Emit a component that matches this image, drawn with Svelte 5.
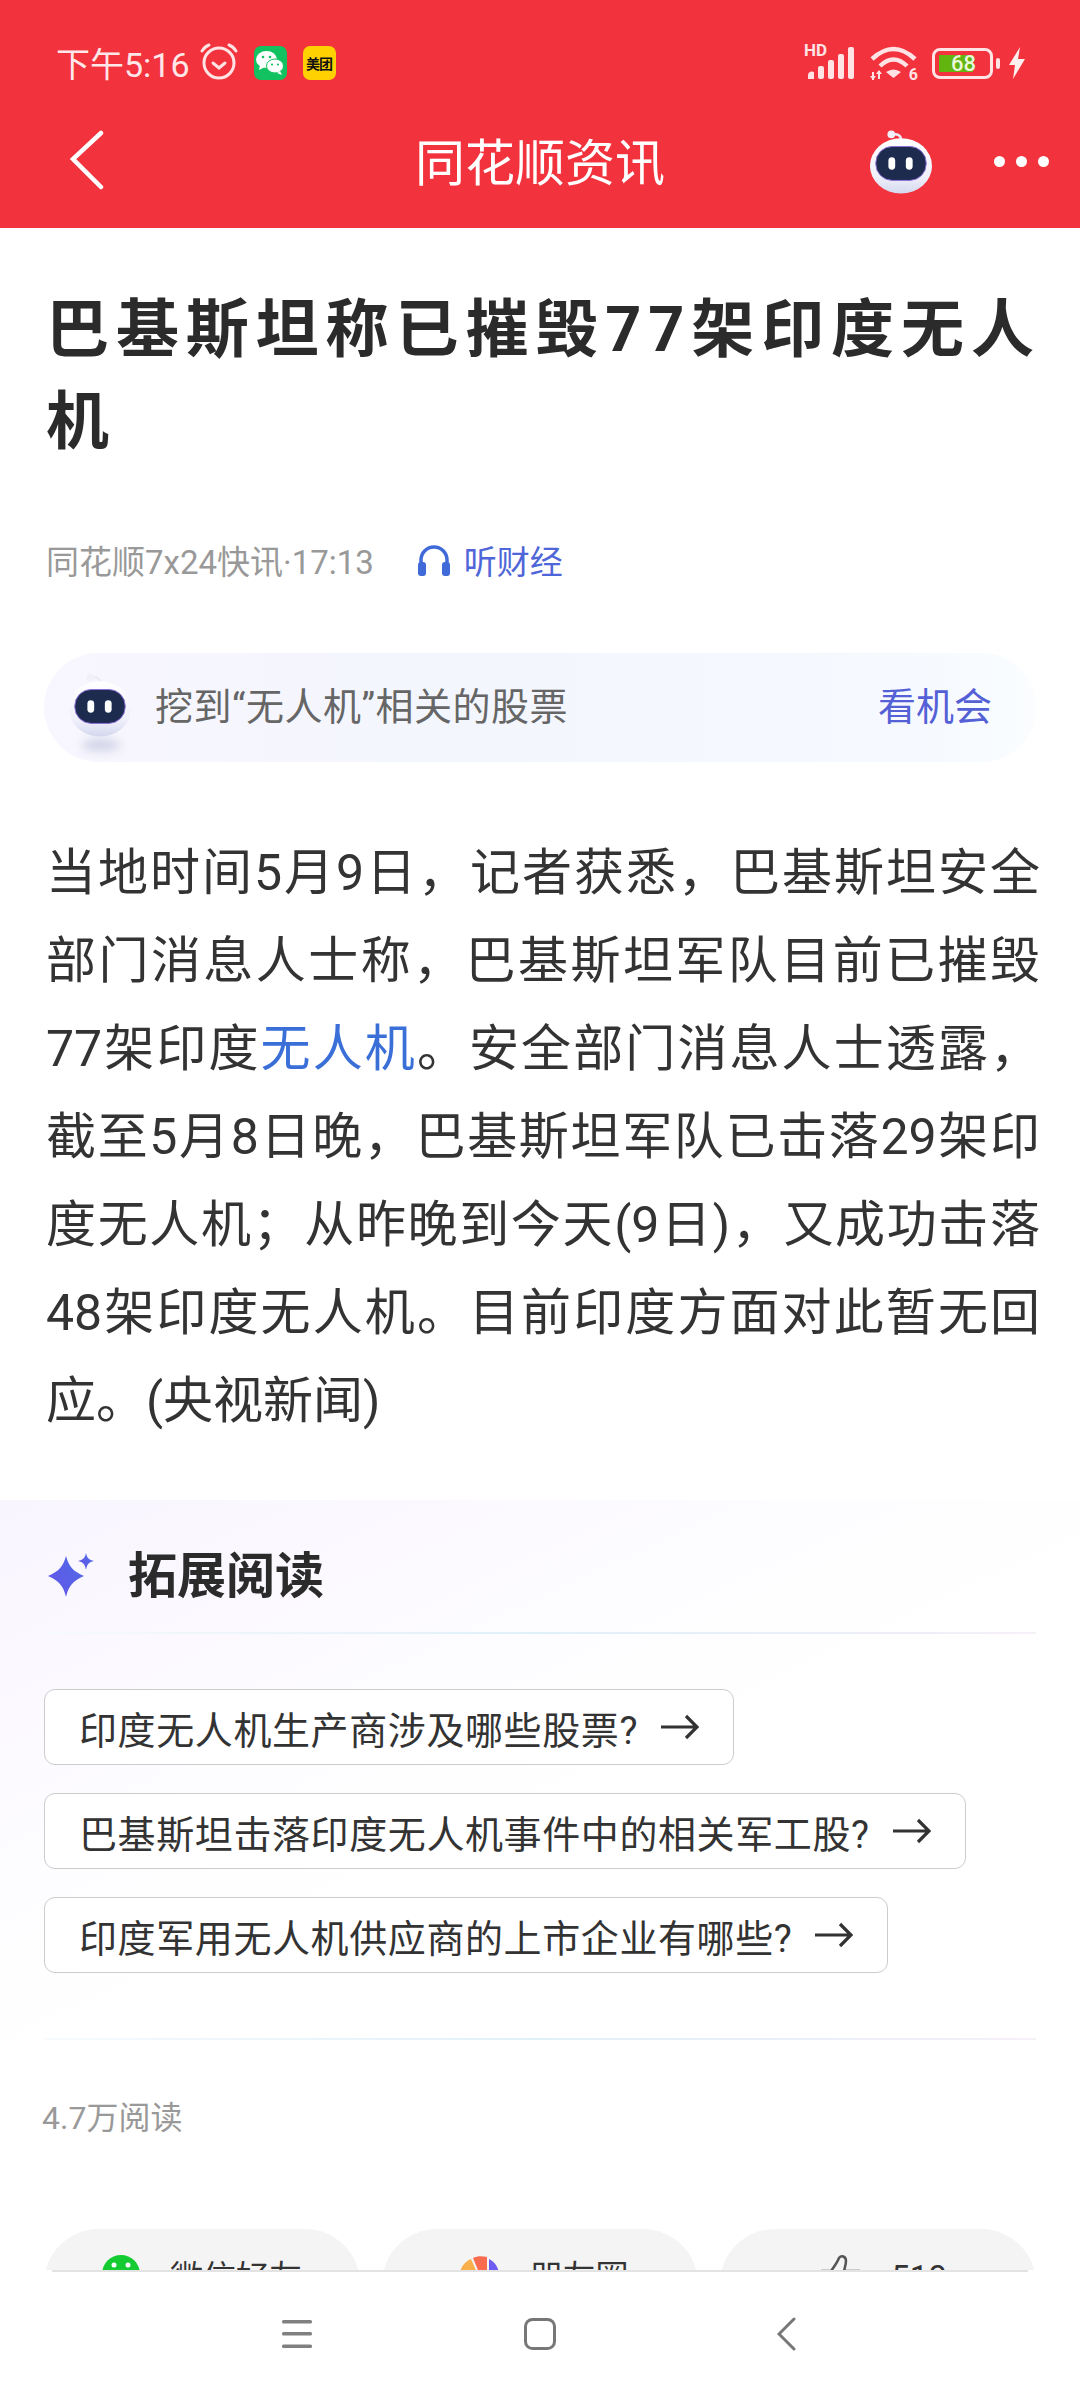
<script>
  const questions = [
    "印度无人机生产商涉及哪些股票?",
    "巴基斯坦击落印度无人机事件中的相关军工股?",
    "印度军用无人机供应商的上市企业有哪些?"
  ];
</script>

{#snippet robot(w, h)}
  <svg width={w} height={h} viewBox="0 0 66 66">
    <defs>
      <linearGradient id="head" x1="0" y1="0" x2="0" y2="1">
        <stop offset="0" stop-color="#ffffff" />
        <stop offset="0.7" stop-color="#f0f0fb" />
        <stop offset="1" stop-color="#d5d8ef" />
      </linearGradient>
    </defs>
    <path d="M24 5c5-2 9 1 9 5" fill="none" stroke="#ecebf8" stroke-width="2.500" />
    <circle cx="23" cy="4.500" r="4" fill="#f2f0fb" />
    <ellipse cx="33" cy="37" rx="32" ry="28.500" fill="url(#head)" />
    <rect x="7" y="17" width="52" height="35" rx="17" fill="#1d2b4f" stroke="#8d6fd8" stroke-width="1" />
    <rect x="20" y="28" width="7" height="13" rx="3.500" fill="#fff" />
    <rect x="38" y="28" width="7" height="13" rx="3.500" fill="#fff" />
  </svg>
{/snippet}

<div class="page">
  <header class="top">
    <div class="status">
      <div class="status-left">
        <span class="time">下午5:16</span>
        <svg class="alarm" width="40" height="40" viewBox="0 0 40 40" fill="none" stroke="#ffe3e5" stroke-width="3" stroke-linecap="round">
          <circle cx="20" cy="22" r="15" />
          <path d="M14 22l6 5 6-5" />
          <path d="M3 10c2-3 4-5 7-6" />
          <path d="M37 10c-2-3-4-5-7-6" />
        </svg>
        <div class="app-icon wechat">
          <svg width="30" height="26" viewBox="0 0 30 26">
            <ellipse cx="11.500" cy="9.500" rx="10.500" ry="8.500" fill="#fff" />
            <path d="M5 15l-1 5 6-3z" fill="#fff" />
            <ellipse cx="20" cy="16" rx="8.500" ry="7" fill="#fff" stroke="#12c160" stroke-width="1" />
            <path d="M25 21l2 4-5-2z" fill="#fff" />
            <circle cx="8" cy="7" r="1.300" fill="#12c160" />
            <circle cx="15" cy="7" r="1.300" fill="#12c160" />
            <circle cx="17" cy="14.500" r="1.100" fill="#12c160" />
            <circle cx="23" cy="14.500" r="1.100" fill="#12c160" />
          </svg>
        </div>
        <div class="app-icon meituan">美团</div>
      </div>
      <div class="status-right">
        <div class="signal">
          <span class="hd">HD</span>
          <svg width="48" height="32" viewBox="0 0 48 32" fill="#ffe3e5">
            <path d="M1 32v-4a4 4 0 0 1 6-3v7z" />
            <rect x="11" y="19" width="6" height="13" rx="2" />
            <rect x="21" y="13" width="6" height="19" rx="2" />
            <rect x="31" y="7" width="6" height="25" rx="2" />
            <rect x="41" y="0" width="6" height="32" rx="2" />
          </svg>
        </div>
        <div class="wifi">
          <svg width="47" height="36" viewBox="0 0 47 36" fill="none" stroke="#ffe3e5" stroke-width="4.500">
            <path d="M2 14Q23.500 -6 45 14" />
            <path d="M10 21Q23.500 8 37 21" />
            <path d="M23.500 33l-7.500-6q7.500-5 15 0z" fill="#ffe3e5" stroke="none" />
            <path d="M3 27v8M9 26v8" stroke-width="2" />
            <path d="M0 31l3 4 3-4zM6 29l3-4 3 4z" fill="#ffe3e5" stroke="none" />
          </svg>
          <span class="wifi-six">6</span>
        </div>
        <div class="battery">
          <div class="battery-fill"></div>
          <span class="battery-num">68</span>
        </div>
        <div class="battery-tip"></div>
        <svg width="18" height="32" viewBox="0 0 18 32" fill="#ffeeee">
          <path d="M12 0L1 18h6L5 32 17 12h-7z" />
        </svg>
      </div>
    </div>
    <nav class="nav">
      <svg class="back" width="36" height="60" viewBox="0 0 36 60" fill="none" stroke="#fff" stroke-width="4.500" stroke-linecap="round">
        <path d="M32 3L4 29l28 28" />
      </svg>
      <h2>同花顺资讯</h2>
      <div class="nav-robot">{@render robot(64, 64)}</div>
      <div class="dots"><i></i><i></i><i></i></div>
    </nav>
  </header>

  <main>
    <h1>巴基斯坦称已摧毁77架印度无人机</h1>
    <div class="meta">
      <span>同花顺7x24快讯·17:13</span>
      <span class="listen">
        <svg width="34" height="32" viewBox="0 0 34 32" fill="none">
          <path d="M4 22V16a13 13 0 0 1 26 0v6" stroke="#3f6ad8" stroke-width="3.500" />
          <rect x="1" y="18" width="8" height="14" rx="3" fill="#3f6ad8" />
          <rect x="25" y="18" width="8" height="14" rx="3" fill="#3f6ad8" />
        </svg>
        听财经
      </span>
    </div>

    <div class="pill">
      <div class="pill-robot">
        {@render robot(64, 64)}
        <div class="robot-shadow"></div>
      </div>
      <span class="pill-text">挖到“无人机”相关的股票</span>
      <span class="pill-link">看机会</span>
    </div>

    <p class="body">当地时间5月9日，记者获悉，巴基斯坦安全部门消息人士称，巴基斯坦军队目前已摧毁77架印度<span class="kw">无人机</span>。安全部门消息人士透露，截至5月8日晚，巴基斯坦军队已击落29架印度无人机；从昨晚到今天(9日)，又成功击落48架印度无人机。目前印度方面对此暂无回应。(央视新闻)</p>
  </main>

  <section class="more">
    <div class="more-head">
      <svg width="50" height="50" viewBox="0 0 50 50">
        <defs>
          <linearGradient id="spark" x1="1" y1="0" x2="0" y2="1">
            <stop offset="0" stop-color="#4f6be8" />
            <stop offset="1" stop-color="#6455e6" />
          </linearGradient>
        </defs>
        <path d="M20 4c3 11 7 15 18 20-11 5-15 9-18 21-3-12-7-16-18-21 11-5 15-9 18-20z" fill="url(#spark)" />
        <path d="M40 1c1 5 3 7 8 8-5 1-7 3-8 9-1-6-3-8-8-9 5-1 7-3 8-8z" fill="url(#spark)" />
      </svg>
      <h3>拓展阅读</h3>
    </div>
    <div class="rule"></div>
    <div class="questions">
      {#each questions as q}
        <div class="question">
          <span>{q}</span>
          <svg width="38" height="26" viewBox="0 0 38 26" fill="none" stroke="#333" stroke-width="3.200">
            <path d="M0 13h36M25 2l11 11-11 11" />
          </svg>
        </div>
      {/each}
    </div>
    <div class="rule rule-end"></div>
  </section>

  <div class="reads">4.7万阅读</div>

  <div class="share">
    <div class="share-btn">
      <svg width="38" height="38" viewBox="0 0 38 38">
        <circle cx="19" cy="19" r="19" fill="#14cc32" />
        <circle cx="12" cy="10" r="2.500" fill="#fff" />
        <circle cx="26" cy="10" r="2.500" fill="#fff" />
      </svg>
      <span>微信好友</span>
    </div>
    <div class="share-btn">
      <svg width="42" height="42" viewBox="0 0 42 42">
        <path d="M20 20L2 17C4 10 8 6 13 4z" fill="#f9b04a" />
        <path d="M22 20L15 3c4-2 9-2 14-1v17z" fill="#f96c50" />
        <path d="M31 4c6 3 10 9 10 16H31z" fill="#6d5cf0" />
      </svg>
      <span>朋友圈</span>
    </div>
    <div class="share-btn">
      <svg width="40" height="40" viewBox="0 0 40 40" fill="none" stroke="#555" stroke-width="2.500">
        <path d="M1 16h9c3-4 6-8 8-13 2-3 7-2 7 3 0 3-1 6-2 10h15v24H1z" />
      </svg>
      <span>510</span>
    </div>
  </div>

  <div class="sysnav">
    <svg width="32" height="30" viewBox="0 0 32 30" fill="#808080">
      <rect x="1" y="1" width="30" height="3.500" rx="1.500" />
      <rect x="1" y="13" width="30" height="3.500" rx="1.500" />
      <rect x="1" y="25.500" width="30" height="3.500" rx="1.500" />
    </svg>
    <svg class="home" width="32" height="32" viewBox="0 0 32 32" fill="none" stroke="#777" stroke-width="3">
      <rect x="1.500" y="1.500" width="29" height="29" rx="7" />
    </svg>
    <svg class="ret" width="20" height="34" viewBox="0 0 20 34" fill="none" stroke="#777" stroke-width="3" stroke-linecap="round">
      <path d="M17 2L2 17l15 15" />
    </svg>
  </div>
</div>

<style>
  :global(body) {
    background: #fff;
  }
  .page {
    position: relative;
    width: 1080px;
    height: 2400px;
    overflow: hidden;
    background: #fff;
    font-family: Roboto, "Noto Sans CJK SC", sans-serif;
    color: #333;
  }
  .top {
    height: 228px;
    background: #f2323c;
    color: #fff;
  }
  .status {
    height: 126px;
    padding: 0 54px 0 56px;
    box-sizing: border-box;
    display: flex;
    justify-content: space-between;
    align-items: center;
  }
  .status-left,
  .status-right {
    display: flex;
    align-items: center;
  }
  .time {
    font-size: 34px;
    color: #ffe6e8;
    margin-right: 9px;
    margin-top: -2px;
  }
  .alarm {
    margin-right: 15px;
    margin-top: -4px;
  }
  .app-icon {
    width: 33px;
    height: 34px;
    border-radius: 7px;
    display: flex;
    align-items: center;
    justify-content: center;
    margin-right: 16px;
  }
  .wechat {
    background: #12c160;
  }
  .meituan {
    background: #ffd100;
    color: #111;
    font-size: 14px;
    font-weight: 700;
    white-space: nowrap;
    letter-spacing: -1px;
  }
  .status-right {
    color: #ffe3e5;
  }
  .signal {
    position: relative;
    width: 50px;
    height: 32px;
    margin-right: 13px;
  }
  .hd {
    position: absolute;
    left: -3px;
    top: -6px;
    font-size: 17px;
    font-weight: 700;
    line-height: 18px;
  }
  .wifi {
    position: relative;
    width: 47px;
    height: 36px;
    margin-right: 15px;
  }
  .wifi-six {
    position: absolute;
    right: -1px;
    bottom: -2px;
    font-size: 16px;
    font-weight: 700;
    background: #f2323c;
    line-height: 16px;
  }
  .battery {
    position: relative;
    width: 61px;
    height: 31px;
    box-sizing: border-box;
    border: 3px solid #ffe3e5;
    border-radius: 8px;
    display: flex;
    align-items: center;
    justify-content: center;
  }
  .battery-fill {
    position: absolute;
    left: 4px;
    top: 4px;
    bottom: 4px;
    width: 34px;
    background: #62b40f;
  }
  .battery-num {
    position: relative;
    font-size: 22px;
    font-weight: 500;
    color: #eaf7d8;
    line-height: 25px;
    margin-left: 2px;
  }
  .battery-tip {
    width: 4px;
    height: 11px;
    margin-left: 3px;
    margin-right: 8px;
    background: #ffe3e5;
    border-radius: 2px;
  }
  .nav {
    position: relative;
    height: 102px;
    display: flex;
    align-items: center;
    padding: 0 31px 0 69px;
  }
  .back {
    margin-top: -34px;
  }
  .nav h2 {
    position: absolute;
    left: 0;
    right: 0;
    top: 8px;
    margin: 0;
    text-align: center;
    font-size: 50px;
    font-weight: 400;
    line-height: 60px;
  }
  .nav-robot {
    margin-left: auto;
    margin-right: 61px;
    margin-top: -30px;
    height: 64px;
  }
  .dots {
    display: flex;
    gap: 11px;
    margin-top: -32px;
  }
  .dots i {
    width: 11px;
    height: 11px;
    border-radius: 50%;
    background: #fff;
  }
  main {
    padding: 56px 30px 0 46px;
  }
  h1 {
    margin: 0;
    font-size: 63px;
    line-height: 92px;
    font-weight: 700;
    letter-spacing: 6.9px;
    color: #2b2b2b;
  }
  .meta {
    margin-top: 70px;
    display: flex;
    align-items: center;
    height: 44px;
    font-size: 33px;
    color: #999;
  }
  .listen {
    display: flex;
    align-items: center;
    gap: 13px;
    margin-left: 43px;
    color: #4f66d8;
    font-size: 33px;
  }
  .pill {
    margin: 71px 13px 0 -2px;
    height: 109px;
    border-radius: 55px;
    background: linear-gradient(90deg, #f8f6fe 0%, #f3f6fd 45%, #f6faff 90%, #fbfdff 100%);
    display: flex;
    align-items: center;
    padding: 0 45px 0 24px;
  }
  .pill-robot {
    position: relative;
    height: 64px;
    margin-right: 23px;
    margin-top: -6px;
  }
  .robot-shadow {
    position: absolute;
    left: 14px;
    bottom: -14px;
    width: 38px;
    height: 12px;
    border-radius: 50%;
    background: #cfd2e6;
    filter: blur(5px);
  }
  .pill-text {
    font-size: 38px;
    letter-spacing: 0.5px;
    color: #666;
    margin-top: -9px;
  }
  .pill-link {
    margin-left: auto;
    font-size: 38px;
    color: #5460d6;
    margin-top: -9px;
  }
  .body {
    margin: 67px 10px 0 0;
    font-size: 50px;
    line-height: 88px;
    text-align: justify;
    color: #333;
  }
  .kw {
    color: #3a6fd8;
  }
  .more {
    margin-top: 55px;
    height: 540px;
    padding: 0 44px;
    background: linear-gradient(155deg, #f8f5fe 0%, #fcfaff 25%, #fefeff 45%, #fff 60%);
  }
  .more-head {
    display: flex;
    align-items: center;
    height: 66px;
    padding-top: 38px;
    padding-bottom: 2px;
    gap: 32px;
  }
  .more-head svg {
    margin-left: 2px;
    margin-top: 12px;
  }
  h3 {
    margin: 0;
    font-size: 49px;
    font-weight: 700;
    color: #2b2b2b;
  }
  .rule {
    height: 2px;
    margin-top: 26px;
    background: linear-gradient(90deg, #f6fafc 0%, #e0f0f9 50%, #f0eef8 90%, #f7f0f8 100%);
  }
  .questions {
    margin-top: 55px;
    display: flex;
    flex-direction: column;
    align-items: flex-start;
    gap: 28px;
  }
  .question {
    height: 76px;
    box-sizing: border-box;
    border: 1.5px solid #cccccc;
    border-radius: 11px;
    background: #fff;
    padding: 0 34px;
    display: flex;
    align-items: center;
    gap: 23px;
    font-size: 38px;
    letter-spacing: 0.6px;
    color: #333;
    white-space: nowrap;
  }
  .rule-end {
    margin-top: 65px;
  }
  .reads {
    margin: 56px 0 0 42px;
    line-height: 44px;
    font-size: 32px;
    color: #999;
  }
  .share {
    margin-top: 89px;
    padding: 0 44px;
    display: grid;
    grid-template-columns: 1fr 1fr 1fr;
    gap: 22px;
  }
  .share-btn {
    height: 110px;
    border-radius: 55px;
    background: #f4f4f4;
    display: flex;
    align-items: flex-start;
    justify-content: center;
    gap: 30px;
    padding-top: 26px;
    box-sizing: border-box;
    font-size: 33px;
    color: #333;
  }
  .share-btn:nth-child(2) {
    padding-left: 6px;
  }
  .share-btn:nth-child(3) {
    padding-left: 12px;
  }
  .share-btn span {
    line-height: 46px;
  }
  .sysnav {
    position: absolute;
    left: 0;
    right: 0;
    bottom: 0;
    height: 130px;
    background: #fff;
    display: flex;
    align-items: center;
    padding-left: 281px;
  }
  .sysnav::before {
    content: "";
    position: absolute;
    top: 0;
    left: 52px;
    right: 52px;
    height: 1.5px;
    background: #e3e3e3;
  }
  .sysnav svg {
    margin-top: -2px;
  }
  .home {
    margin-left: 211px;
  }
  .ret {
    margin-left: 221px;
  }
</style>
